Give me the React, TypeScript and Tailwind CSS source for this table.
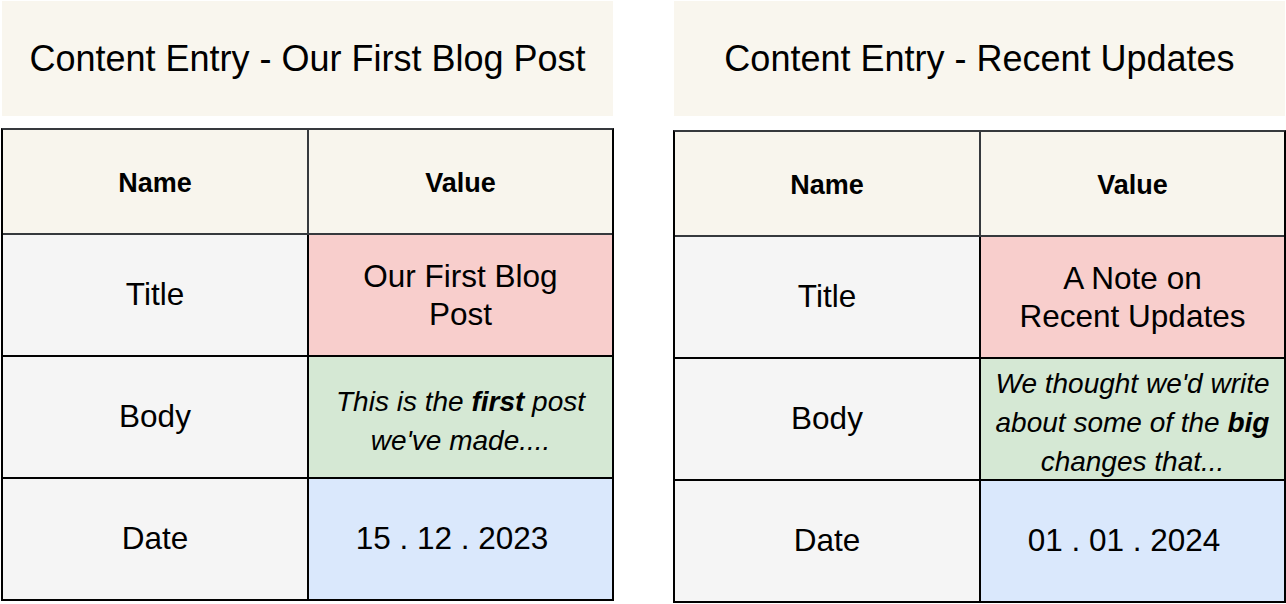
import React from "react";

const font = { fontFamily: '"Liberation Sans", Arial, sans-serif' };

function Panel({
  title,
  tableTop,
  titleValue,
  body,
  date,
}: {
  title: string;
  tableTop: string;
  titleValue: React.ReactNode;
  body: React.ReactNode;
  date: string;
}) {
  return (
    <div className="flex w-[613px] flex-col">
      <div className="ml-[1px] flex h-[115px] w-[611px] items-center justify-center bg-[#f9f6ee] text-[36px] text-black">
        {title}
      </div>
      <div className={`${tableTop} flex h-[473px] w-[613px] flex-col border-2 border-black border-t-[#36393d] text-black`}>
        <div className="flex h-[103px] bg-[#f8f5ed] pt-[3px]">
          <div className="flex w-[304px] items-center justify-center text-[27px] font-bold">Name</div>
          <div className="-mt-[3px] flex flex-1 items-center justify-center border-l-2 border-[#36393d] pt-[3px] text-[27px] font-bold">Value</div>
        </div>
        <div className="flex h-[122px] border-t-2 border-[#36393d]">
          <div className="flex w-[304px] items-center justify-center bg-[#f5f5f5] text-[31.5px]">Title</div>
          <div className="flex flex-1 items-center justify-center border-l-2 border-black bg-[#f8cecc]">
            <div className="w-[236px] text-center text-[31.5px] leading-[38px]">{titleValue}</div>
          </div>
        </div>
        <div className="flex h-[122px] border-t-2 border-black">
          <div className="flex w-[304px] items-center justify-center bg-[#f5f5f5] text-[31.5px]">Body</div>
          <div className="flex flex-1 items-center justify-center border-l-2 border-black bg-[#d5e8d4] pt-[7px]">
            <div className="w-[290px] text-center text-[28px] italic leading-[39px]">{body}</div>
          </div>
        </div>
        <div className="flex h-[122px] border-t-2 border-black">
          <div className="flex w-[304px] items-center justify-center bg-[#f5f5f5] text-[31.5px]">Date</div>
          <div className="flex flex-1 items-center justify-center border-l-2 border-black bg-[#dae8fc] pr-[17px] text-[31.5px]">
            {date}
          </div>
        </div>
      </div>
    </div>
  );
}

export default function App() {
  return (
    <div className="flex h-[604px] w-[1286px] gap-[59px] bg-white pl-[1px] pt-[1px]" style={font}>
      <Panel
        title="Content Entry - Our First Blog Post"
        tableTop="mt-[12px]"
        titleValue="Our First Blog Post"
        body={
          <>
            This is the <b>first</b> post we've made....
          </>
        }
        date="15 . 12 . 2023"
      />
      <Panel
        title="Content Entry - Recent Updates"
        tableTop="mt-[14px]"
        titleValue="A Note on Recent Updates"
        body={
          <>
            We thought we'd write about some of the <b>big</b> changes that...
          </>
        }
        date="01 . 01 . 2024"
      />
    </div>
  );
}
